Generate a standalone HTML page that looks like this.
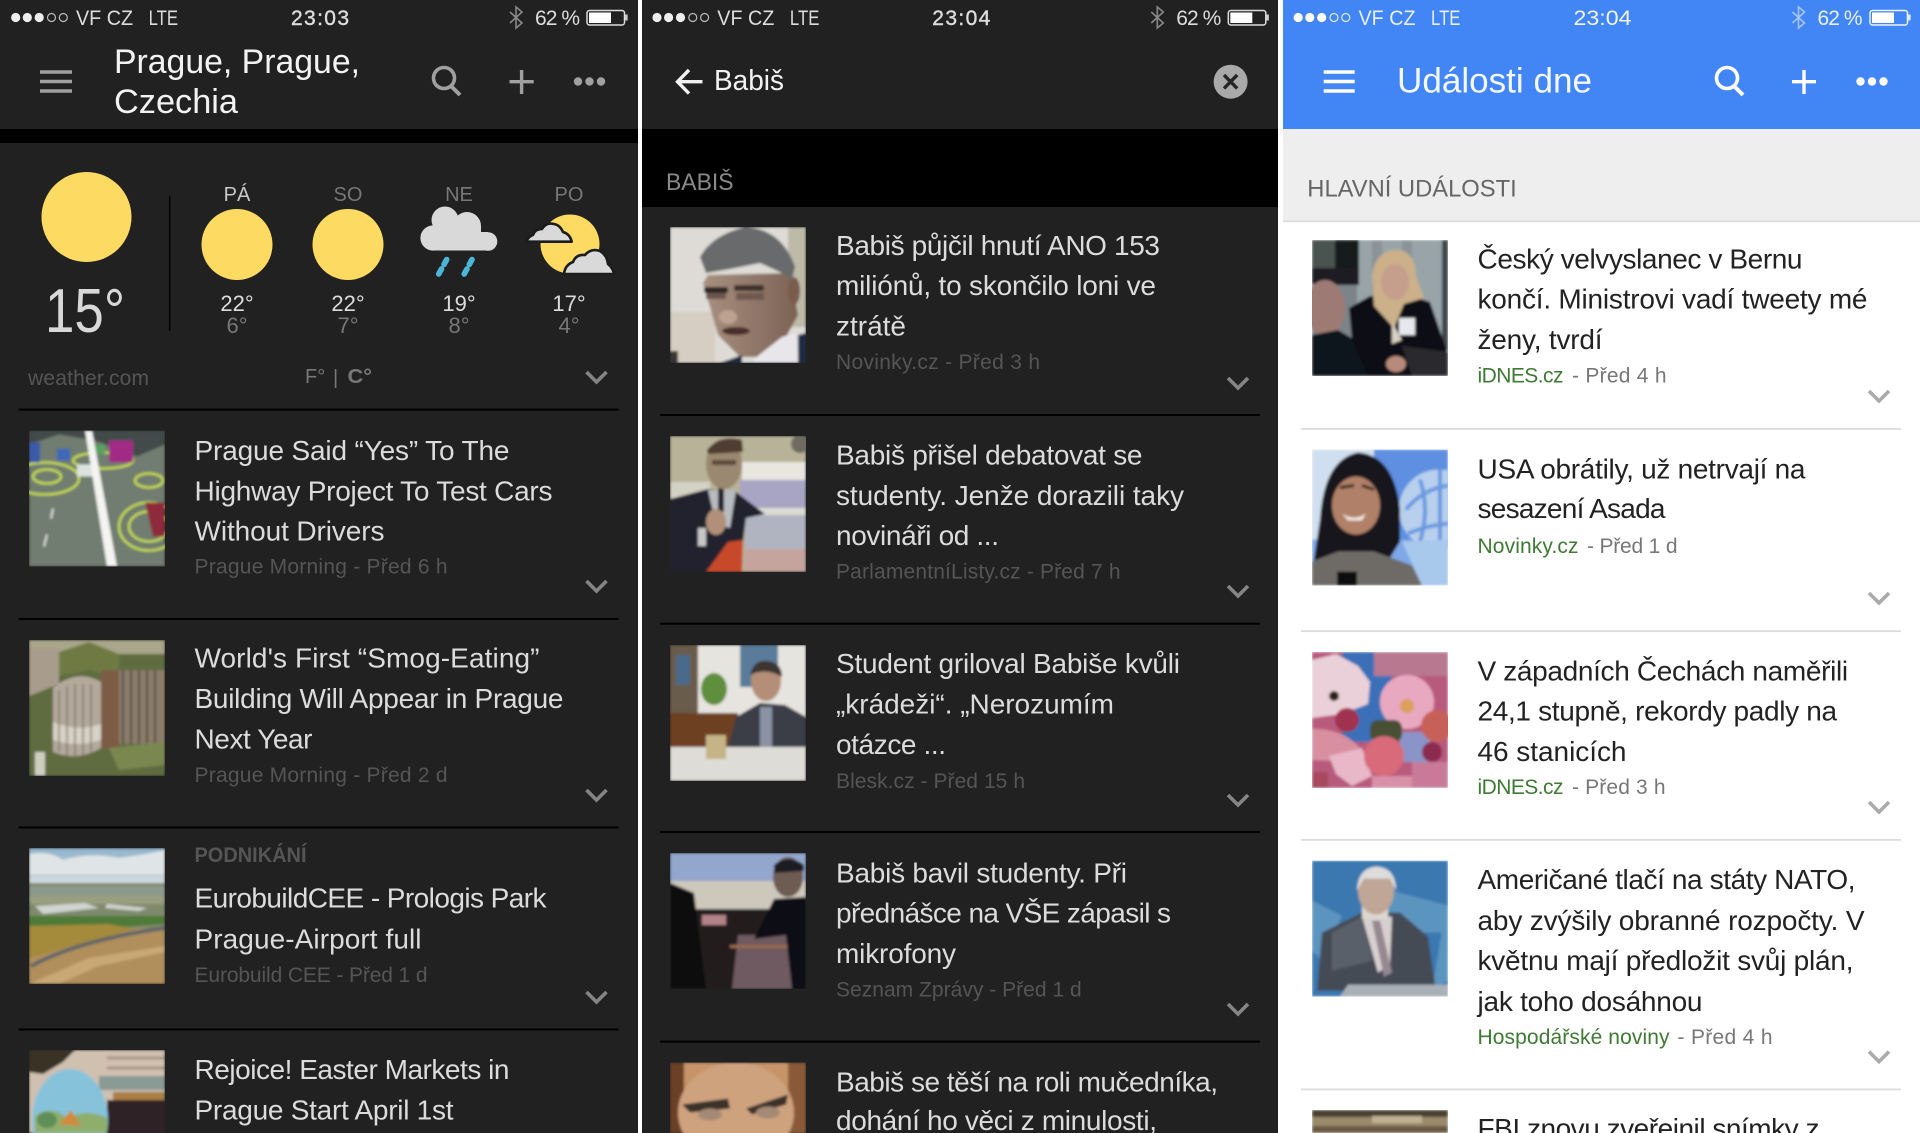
<!DOCTYPE html>
<html lang="cs"><head><meta charset="utf-8"><title>News</title>
<style>
html,body{margin:0;padding:0;background:#fff;width:1920px;height:1133px;overflow:hidden}
svg.root{display:block;position:absolute;left:0;top:0;filter:blur(.35px)}
text{font-family:"Liberation Sans",sans-serif;white-space:pre}
.s{font-size:21px;fill:#ddd}
.c{text-anchor:middle}
.ti{font-size:28px;fill:#dcdcdc}
.m{font-size:21px;fill:#555}
.h{font-size:34px;fill:#f2f2f2}
.d{font-size:20px;fill:#777}
.hi{font-size:22px;fill:#ddd}
.lo{font-size:22px;fill:#777}
.l .ti{fill:#222}
.l .m{fill:#777}
.l .g{fill:#3f7a35}
.ch{fill:none;stroke:#858585;stroke-width:3.6}
.l .ch{stroke:#aaa}
.dv{fill:#000}
.l .dv{fill:#dcdcdc}
</style></head><body>
<svg class="root" width="1920" height="1133" viewBox="0 0 1920 1133" xmlns="http://www.w3.org/2000/svg">
<defs>
<filter id="b" x="-10%" y="-10%" width="120%" height="120%"><feGaussianBlur stdDeviation="1.4"/></filter>
<linearGradient id="sky" x1="0" y1="0" x2="0" y2="1"><stop offset="0" stop-color="#8fb2cc"/><stop offset="1" stop-color="#d5dcdc"/></linearGradient>
<linearGradient id="face" x1="0" y1="0" x2="1" y2="0"><stop offset="0" stop-color="#a89080"/><stop offset="1" stop-color="#7c6254"/></linearGradient>
</defs>
<rect width="1920" height="1133" fill="#fff"/>

<!-- PANEL 1 -->
<rect x="0" y="0" width="638" height="1133" fill="#212121"/>
<rect x="0" y="129" width="638" height="14" fill="#000"/>
<g>
<circle cx="15.7" cy="17.5" r="4.6" fill="#eee"/><circle cx="27.3" cy="17.5" r="4.6" fill="#eee"/><circle cx="39.2" cy="17.5" r="4.6" fill="#eee"/><circle cx="51.5" cy="17.5" r="4" fill="none" stroke="#bbb" stroke-width="1.2"/><circle cx="63.3" cy="17.5" r="4" fill="none" stroke="#bbb" stroke-width="1.2"/>
<text class="s" x="76" y="25" textLength="57" lengthAdjust="spacingAndGlyphs">VF CZ</text><text class="s" x="148.6" y="25" textLength="29.5" lengthAdjust="spacingAndGlyphs">LTE</text>
<text class="s" x="291" y="25" textLength="58" stroke="#ddd" stroke-width=".4">23:03</text>
<path d="M510 12L522 23L516 28V7L522 12L510 23" fill="none" stroke="#888" stroke-width="1.6"/>
<text class="s" x="535" y="25" textLength="45">62 %</text>
<rect x="587" y="10.5" width="37.5" height="14.5" rx="2.5" fill="none" stroke="#ddd" stroke-width="1.5"/><rect x="589" y="12.5" width="22" height="10.5" fill="#fff"/><rect x="625" y="14.5" width="2.6" height="6" fill="#ccc"/>
</g>
<path d="M40 72H72M40 81.5H72M40 91H72" stroke="#a0a0a0" stroke-width="3.4"/>
<text class="h" x="114" y="73" textLength="246" lengthAdjust="spacingAndGlyphs">Prague, Prague,</text>
<text class="h" x="114" y="113" textLength="124" lengthAdjust="spacingAndGlyphs">Czechia</text>
<circle cx="444" cy="78" r="10.5" fill="none" stroke="#a0a0a0" stroke-width="3.6"/><path d="M451 86L460 95" stroke="#a0a0a0" stroke-width="4"/>
<path d="M521.6 70V94M509.5 81.7H533.7" stroke="#a0a0a0" stroke-width="3.4"/>
<circle cx="578" cy="81.5" r="4.2" fill="#a0a0a0"/><circle cx="589.5" cy="81.5" r="4.2" fill="#a0a0a0"/><circle cx="601" cy="81.5" r="4.2" fill="#a0a0a0"/>

<!-- weather -->
<circle cx="86.5" cy="217" r="45" fill="#fddb62"/>
<text x="45" y="332" font-size="62" fill="#d8d8d8" textLength="80" lengthAdjust="spacingAndGlyphs">15°</text>
<rect x="169" y="196" width="1.4" height="135" fill="#000"/>
<text class="d c" x="237" y="201" style="fill:#c8c8c8">PÁ</text><text class="d c" x="348" y="201">SO</text><text class="d c" x="459" y="201">NE</text><text class="d c" x="569" y="201">PO</text>
<circle cx="237" cy="244.5" r="35.5" fill="#fddb62"/><circle cx="348" cy="244.5" r="35.5" fill="#fddb62"/>
<g fill="#d9d9d9"><circle cx="445" cy="220" r="13.5"/><circle cx="467" cy="226" r="14"/><circle cx="433" cy="238" r="12.6"/><circle cx="488" cy="241.5" r="9.3"/><rect x="433" y="225" width="48" height="25.5"/><rect x="470" y="232" width="18" height="18.5"/></g>
<path d="M446.7 259.5L444 264.5M441.5 269L438.7 274M472 259.5L469.3 264.5M467 269L464.2 274" stroke="#4db6d8" stroke-width="5.6" stroke-linecap="round"/>
<circle cx="570" cy="244" r="29.5" fill="#fddb62"/>
<rect x="520" y="212" width="20" height="32" fill="#212121"/>
<path d="M526 241.7Q529 236 533 235Q535 229 542 229Q546 222 554 224Q560 225 563 232Q570 234 571.7 241.7Z" fill="#d9d9d9" stroke="#1c1c1c" stroke-width="2.6" stroke-linejoin="round"/>
<path d="M564 274Q565 265 573 262Q576 254 585 255Q591 248 600 251Q607 255 608 264Q613 268 614 274Z" fill="#d9d9d9" stroke="#1c1c1c" stroke-width="2.6" stroke-linejoin="round"/>
<rect x="558" y="275" width="60" height="8" fill="#212121"/>
<text class="hi c" x="237" y="311">22°</text><text class="hi c" x="348" y="311">22°</text><text class="hi c" x="459" y="311">19°</text><text class="hi c" x="569" y="311">17°</text>
<text class="lo c" x="237" y="333">6°</text><text class="lo c" x="348" y="333">7°</text><text class="lo c" x="459" y="333">8°</text><text class="lo c" x="569" y="333">4°</text>
<text class="m" x="28" y="385" textLength="121">weather.com</text>
<text x="305" y="383" font-size="20" fill="#777">F°</text><text x="333" y="384" font-size="20" fill="#777">|</text><text x="347.5" y="383" font-size="20" font-weight="700" fill="#777" textLength="24.5" lengthAdjust="spacingAndGlyphs">C°</text>
<path class="ch" d="M586.5 372L596.5 382L606.5 372"/>
<rect class="dv" x="18.5" y="408.6" width="600" height="2"/>

<!-- P1 articles -->
<svg x="29" y="430.5" width="136" height="136" viewBox="0 0 136 136"><g filter="url(#b)"><rect width="136" height="136" fill="#6f7d70"/><path d="M0 0H136V14L108 26L66 10L30 4L0 14Z" fill="#434c48"/><g fill="none" stroke="#c4d850" stroke-width="2.6"><ellipse cx="18" cy="46" rx="14" ry="7"/><ellipse cx="16" cy="48" rx="34" ry="16"/><ellipse cx="120" cy="50" rx="14" ry="7"/><ellipse cx="120" cy="96" rx="30" ry="24"/><ellipse cx="120" cy="96" rx="20" ry="15"/><ellipse cx="74" cy="30" rx="30" ry="8"/></g><rect x="0" y="12" width="11" height="20" fill="#3b5aa8"/><rect x="28" y="18" width="13" height="12" fill="#3f67b8"/><rect x="48" y="34" width="16" height="12" fill="#dce2de"/><rect x="66" y="14" width="10" height="10" fill="#58a060"/><rect x="80" y="10" width="24" height="22" fill="#a02a84"/><path d="M56 0L63 0L88 136L78 136Z" fill="#f4f4f2"/><path d="M116 72H136V106H124Z" fill="#8e2c3a"/><path d="M24 78L22 88M18 104L15 116" stroke="#ddd" stroke-width="2"/></g></svg>
<text class="ti" x="194.5" y="460" textLength="315">Prague Said “Yes” To The</text>
<text class="ti" x="194.5" y="500.5" textLength="358">Highway Project To Test Cars</text>
<text class="ti" x="194.5" y="540.5" textLength="190">Without Drivers</text>
<text class="m" x="194.5" y="573.6" textLength="253">Prague Morning - Před 6 h</text>
<path class="ch" d="M586.5 581L596.5 591L606.5 581"/>
<rect class="dv" x="18.5" y="618" width="600" height="2"/>

<svg x="29" y="640" width="136" height="136" viewBox="0 0 136 136"><g filter="url(#b)"><rect width="136" height="136" fill="#5f6c3f"/><rect width="136" height="14" fill="#a9a68a"/><path d="M0 8H30V44L0 56Z" fill="#a89c8c"/><path d="M30 12L60 2L90 14L90 40L62 30L30 36Z" fill="#6e7a42"/><path d="M24 48Q48 28 72 42V108Q48 122 24 112Z" fill="#b2a99b"/><path d="M24 82Q48 92 72 84V100Q48 108 24 100Z" fill="#d8d2c6"/><path d="M30 50V112M38 46V116M46 44V118M54 44V116M62 44V112" stroke="#7d7468" stroke-width="1.4"/><rect x="72" y="30" width="18" height="78" fill="#7d5c45"/><rect x="90" y="30" width="46" height="74" fill="#8a7d6b"/><path d="M94 30V104M102 30V104M110 30V104M118 30V104M126 30V104" stroke="#564c40" stroke-width="2"/><path d="M80 108L136 102V125L90 130Z" fill="#7a8850"/><rect x="6" y="112" width="10" height="24" fill="#cfcfc0"/></g></svg>
<text class="ti" x="194.5" y="667.7" textLength="345">World's First “Smog-Eating”</text>
<text class="ti" x="194.5" y="708" textLength="369">Building Will Appear in Prague</text>
<text class="ti" x="194.5" y="748.6" textLength="118">Next Year</text>
<text class="m" x="194.5" y="782" textLength="253">Prague Morning - Před 2 d</text>
<path class="ch" d="M586.5 790L596.5 800L606.5 790"/>
<rect class="dv" x="18.5" y="826.5" width="600" height="2"/>

<svg x="29" y="848" width="136" height="136" viewBox="0 0 136 136"><g filter="url(#b)"><rect width="136" height="36" fill="url(#sky)"/><path d="M0 6Q20 2 34 12Q60 4 90 10Q120 6 136 2V26H0Z" fill="#dfe5e6"/><rect y="35" width="136" height="101" fill="#7f8a6c"/><rect y="38" width="136" height="10" fill="#8c9a8c"/><rect y="48" width="136" height="8" fill="#9a9e80"/><path d="M6 58L56 55L70 60L14 66ZM78 56L118 60L110 63L76 60Z" fill="#cfd4d0"/><path d="M0 68H136V76L50 82L0 78Z" fill="#4f7a38"/><path d="M0 78L80 76L110 82L0 110Z" fill="#a48a3a"/><path d="M0 110L110 80L136 82V136H0Z" fill="#b08f5c"/><path d="M2 118Q50 92 136 80" fill="none" stroke="#626668" stroke-width="4"/><path d="M0 136L60 110L136 98V104L70 118L30 136Z" fill="#c8a875"/></g></svg>
<text x="194.5" y="862" font-size="21" font-weight="700" fill="#555" textLength="112" lengthAdjust="spacingAndGlyphs">PODNIKÁNÍ</text>
<text class="ti" x="194.5" y="907.5" textLength="352">EurobuildCEE - Prologis Park</text>
<text class="ti" x="194.5" y="948.5" textLength="227">Prague-Airport full</text>
<text class="m" x="194.5" y="982" textLength="233">Eurobuild CEE - Před 1 d</text>
<path class="ch" d="M586.5 992L596.5 1002L606.5 992"/>
<rect class="dv" x="18.5" y="1028.5" width="600" height="2"/>

<svg x="29" y="1050" width="136" height="83" viewBox="0 0 136 83"><g filter="url(#b)"><rect width="136" height="83" fill="#cfc0b0"/><path d="M0 0H46L34 12L14 24L0 22Z" fill="#3a3028"/><path d="M78 8H136M78 18H136" stroke="#a89484" stroke-width="3"/><rect x="70" y="26" width="66" height="14" fill="#8a9a94"/><rect x="84" y="42" width="52" height="10" fill="#a97f44"/><rect x="78" y="50" width="58" height="33" fill="#2f2325"/><ellipse cx="41" cy="70" rx="38" ry="51" fill="#86c3db"/><path d="M6 66Q22 54 38 68Q58 58 78 68V83H6Z" fill="#8fae6c"/><path d="M30 74L42 60L52 76Z" fill="#d08b3c"/><ellipse cx="18" cy="70" rx="10" ry="8" fill="#5f8e58"/></g></svg>
<text class="ti" x="194.5" y="1079" textLength="315">Rejoice! Easter Markets in</text>
<text class="ti" x="194.5" y="1119.5" textLength="259">Prague Start April 1st</text>

<!-- PANEL 2 -->
<rect x="642" y="0" width="636" height="1133" fill="#212121"/>
<rect x="642" y="129" width="636" height="78" fill="#000"/>
<g>
<circle cx="657" cy="17.5" r="4.6" fill="#eee"/><circle cx="668.6" cy="17.5" r="4.6" fill="#eee"/><circle cx="680.5" cy="17.5" r="4.6" fill="#eee"/><circle cx="692.8" cy="17.5" r="4" fill="none" stroke="#bbb" stroke-width="1.2"/><circle cx="704.6" cy="17.5" r="4" fill="none" stroke="#bbb" stroke-width="1.2"/>
<text class="s" x="717.3" y="25" textLength="57" lengthAdjust="spacingAndGlyphs">VF CZ</text><text class="s" x="789.9" y="25" textLength="29.5" lengthAdjust="spacingAndGlyphs">LTE</text>
<text class="s" x="932.3" y="25" textLength="58" stroke="#ddd" stroke-width=".4">23:04</text>
<path d="M1151.3 12L1163.3 23L1157.3 28V7L1163.3 12L1151.3 23" fill="none" stroke="#888" stroke-width="1.6"/>
<text class="s" x="1176.3" y="25" textLength="45">62 %</text>
<rect x="1228.3" y="10.5" width="37.5" height="14.5" rx="2.5" fill="none" stroke="#ddd" stroke-width="1.5"/><rect x="1230.3" y="12.5" width="22" height="10.5" fill="#fff"/><rect x="1266.3" y="14.5" width="2.6" height="6" fill="#ccc"/>
</g>
<path d="M702.5 81.7H678M689 70L677.5 81.7L689 93.5" fill="none" stroke="#f2f2f2" stroke-width="3.4"/>
<text x="714" y="90" font-size="29" fill="#f2f2f2" textLength="70" lengthAdjust="spacingAndGlyphs">Babiš</text>
<circle cx="1230.6" cy="81.7" r="17" fill="#a9a9a9"/><path d="M1224 75L1237.2 88.4M1237.2 75L1224 88.4" stroke="#262626" stroke-width="3.4"/>
<text x="666" y="190" font-size="24" fill="#8a8a8a" textLength="67.5" lengthAdjust="spacingAndGlyphs">BABIŠ</text>

<svg x="670" y="227" width="136" height="136" viewBox="0 0 136 136"><g filter="url(#b)"><rect width="136" height="136" fill="#dedbd6"/><rect y="85" width="45" height="51" fill="#d6cec2"/><rect x="118" width="18" height="100" fill="#bdbaa8"/><path d="M33 56L38 48L120 46L128 88L116 110L92 130H70L48 108Z" fill="url(#face)"/><path d="M30 30Q42 8 75 0Q112 2 125 40L122 52L112 46L90 36L60 42L36 46Z" fill="#686a6c"/><ellipse cx="124" cy="64" rx="6" ry="14" fill="#7a5c50"/><rect x="34" y="60" width="24" height="6" rx="2" fill="#2e2624"/><rect x="64" y="58" width="30" height="6" rx="2" fill="#3e302c"/><rect x="36" y="66" width="20" height="6" fill="#6a5650"/><rect x="66" y="66" width="28" height="7" fill="#6e5850"/><ellipse cx="58" cy="90" rx="9" ry="7" fill="#bda292"/><ellipse cx="66" cy="104" rx="14" ry="4" fill="#4a2e2a"/><path d="M84 132L112 110L126 106L128 136H84Z" fill="#e8e6ea"/><path d="M50 136L72 128V136ZM128 108L136 106V136H128Z" fill="#1f2a44"/><rect x="0" y="124" width="8" height="12" fill="#3a3630"/></g></svg>
<text class="ti" x="836" y="255" textLength="324">Babiš půjčil hnutí ANO 153</text>
<text class="ti" x="836" y="295" textLength="320">miliónů, to skončilo loni ve</text>
<text class="ti" x="836" y="335.7" textLength="70">ztrátě</text>
<text class="m" x="836" y="369" textLength="204">Novinky.cz - Před 3 h</text>
<path class="ch" d="M1228 378L1238 388L1248 378"/>
<rect class="dv" x="660" y="414" width="600" height="2"/>

<svg x="670" y="436" width="136" height="136" viewBox="0 0 136 136"><g filter="url(#b)"><rect width="136" height="136" fill="#b8b298"/><rect y="46" width="40" height="16" fill="#d4d2c4"/><rect x="72" y="26" width="64" height="18" fill="#e8e6de"/><rect x="70" y="44" width="66" height="28" fill="#a8a4c4"/><rect x="80" y="72" width="56" height="7" fill="#dcdcd4"/><circle cx="130" cy="8" r="9" fill="#6e6c60"/><rect x="75" y="79" width="61" height="34" fill="#b0b4c0"/><rect x="75" y="113" width="61" height="23" fill="#c4a49c"/><path d="M0 63L38 53L66 56L95 78L76 82L73 106L50 136H0Z" fill="#20222e"/><path d="M38 54L66 54L60 92L46 88Z" fill="#b8bcc0"/><rect x="48" y="46" width="6" height="30" fill="#232328"/><ellipse cx="54" cy="28" rx="18" ry="25" fill="#9a8870"/><path d="M37 14Q50 -2 72 4L73 16L38 18Z" fill="#4f3e30"/><rect x="42" y="24" width="24" height="5" fill="#5c4a3c"/><ellipse cx="46" cy="86" rx="10" ry="13" fill="#b09078"/><path d="M36 136L58 106L73 104L72 136Z" fill="#c84a2a"/><rect x="28" y="92" width="8" height="18" fill="#c8c8c8"/></g></svg>
<text class="ti" x="836" y="464.5" textLength="306.5">Babiš přišel debatovat se</text>
<text class="ti" x="836" y="505" textLength="348">studenty. Jenže dorazili taky</text>
<text class="ti" x="836" y="545" textLength="163">novináři od ...</text>
<text class="m" x="836" y="578.6" textLength="284.5">ParlamentníListy.cz - Před 7 h</text>
<path class="ch" d="M1228 586L1238 596L1248 586"/>
<rect class="dv" x="660" y="622.7" width="600" height="2"/>

<svg x="670" y="645" width="136" height="136" viewBox="0 0 136 136"><g filter="url(#b)"><rect width="136" height="136" fill="#e6e4de"/><rect width="28" height="68" fill="#6b5b4c"/><rect x="6" y="10" width="14" height="30" fill="#4a6a8a"/><rect x="70" width="38" height="42" fill="#5a7c9a"/><ellipse cx="44" cy="44" rx="13" ry="16" fill="#5e8e3e"/><rect x="0" y="68" width="68" height="34" fill="#6e3f22"/><path d="M58 104L66 72L90 58L115 60L136 72V112H58Z" fill="#3a3c46"/><rect x="90" y="62" width="12" height="46" fill="#8b93a4"/><ellipse cx="96" cy="36" rx="15" ry="20" fill="#b48e76"/><path d="M80 30Q84 14 98 16Q112 18 112 32Q96 22 80 30Z" fill="#3c3632"/><rect x="0" y="102" width="136" height="34" fill="#dedcd6"/><rect x="36" y="90" width="20" height="24" fill="#c4b486"/></g></svg>
<text class="ti" x="836" y="673" textLength="344">Student griloval Babiše kvůli</text>
<text class="ti" x="836" y="713.7" textLength="278">„krádeži“. „Nerozumím</text>
<text class="ti" x="836" y="754" textLength="110">otázce ...</text>
<text class="m" x="836" y="788" textLength="189">Blesk.cz - Před 15 h</text>
<path class="ch" d="M1228 795L1238 805L1248 795"/>
<rect class="dv" x="660" y="831" width="600" height="2"/>

<svg x="670" y="853" width="136" height="136" viewBox="0 0 136 136"><g filter="url(#b)"><rect width="136" height="30" fill="#93a6cc"/><rect y="28" width="136" height="30" fill="#cdc8bc"/><rect y="56" width="136" height="80" fill="#231b1c"/><path d="M0 30L24 40L36 136H0Z" fill="#0e0e10"/><rect x="32" y="62" width="24" height="10" fill="#b3838a"/><path d="M62 136L68 82H116L122 136Z" fill="#6e5a60"/><rect x="60" y="92" width="68" height="3" fill="#9c6a50"/><path d="M84 86L104 46L136 44V136H122L116 82Z" fill="#0f0f12"/><ellipse cx="118" cy="24" rx="15" ry="20" fill="#6e5c52"/><path d="M104 12Q118 0 134 12L134 18L104 20Z" fill="#1d1d20"/></g></svg>
<text class="ti" x="836" y="882.5" textLength="291">Babiš bavil studenty. Při</text>
<text class="ti" x="836" y="922.5" textLength="335">přednášce na VŠE zápasil s</text>
<text class="ti" x="836" y="963" textLength="120">mikrofony</text>
<text class="m" x="836" y="996.6" textLength="245.7">Seznam Zprávy - Před 1 d</text>
<path class="ch" d="M1228 1004L1238 1014L1248 1004"/>
<rect class="dv" x="660" y="1040.6" width="600" height="2"/>

<svg x="670" y="1062.5" width="136" height="71" viewBox="0 0 136 71"><g filter="url(#b)"><rect width="136" height="71" fill="#c69468"/><rect width="14" height="71" fill="#6a3f28"/><rect x="118" width="18" height="71" fill="#8a5a38"/><ellipse cx="66" cy="50" rx="58" ry="50" fill="#cfa27e"/><path d="M12 42L58 36L60 46L20 50ZM76 46L118 32L116 42L82 52Z" fill="#3a322c"/><ellipse cx="40" cy="52" rx="12" ry="6" fill="#a48a76"/><ellipse cx="98" cy="50" rx="12" ry="6" fill="#a48a76"/></g></svg>
<text class="ti" x="836" y="1091.6" textLength="382">Babiš se těší na roli mučedníka,</text>
<text class="ti" x="836" y="1130" textLength="321">dohání ho věci z minulosti,</text>

<!-- PANEL 3 -->
<g class="l">
<rect x="1283" y="0" width="637" height="129" fill="#4285f4"/>
<rect x="1283" y="129" width="637" height="92" fill="#eeeeee"/>
<rect x="1283" y="220.5" width="637" height="1.6" fill="#d8d8d8"/>
<g>
<circle cx="1298.2" cy="17.5" r="4.6" fill="#fff"/><circle cx="1309.8" cy="17.5" r="4.6" fill="#fff"/><circle cx="1321.7" cy="17.5" r="4.6" fill="#fff"/><circle cx="1334" cy="17.5" r="4" fill="none" stroke="#dfe9fb" stroke-width="1.2"/><circle cx="1345.8" cy="17.5" r="4" fill="none" stroke="#dfe9fb" stroke-width="1.2"/>
<text class="s" x="1358.5" y="25" textLength="57" lengthAdjust="spacingAndGlyphs" style="fill:#e8f0fd">VF CZ</text><text class="s" x="1431" y="25" textLength="29.5" lengthAdjust="spacingAndGlyphs" style="fill:#e8f0fd">LTE</text>
<text class="s" x="1573.5" y="25" textLength="58" lengthAdjust="spacingAndGlyphs" style="fill:#f0f5fe">23:04</text>
<path d="M1792.5 12L1804.5 23L1798.5 28V7L1804.5 12L1792.5 23" fill="none" stroke="#a7c5f9" stroke-width="1.6"/>
<text class="s" x="1817.5" y="25" textLength="45" style="fill:#e8f0fd">62 %</text>
<rect x="1870" y="10.5" width="37.5" height="14.5" rx="2.5" fill="none" stroke="#eef4fe" stroke-width="1.5"/><rect x="1872" y="12.5" width="22" height="10.5" fill="#fff"/><rect x="1908" y="14.5" width="2.6" height="6" fill="#e0eafd"/>
</g>
<path d="M1323.7 72H1354.7M1323.7 81.5H1354.7M1323.7 91H1354.7" stroke="#fff" stroke-width="3.4"/>
<text x="1397" y="92.7" font-size="35" fill="#f4f8ff" textLength="195" lengthAdjust="spacingAndGlyphs">Události dne</text>
<circle cx="1727" cy="78" r="10.5" fill="none" stroke="#fff" stroke-width="3.6"/><path d="M1734 86L1743 95" stroke="#fff" stroke-width="4"/>
<path d="M1804 70V94M1792 81.7H1816" stroke="#fff" stroke-width="3.4"/>
<circle cx="1860.5" cy="81.5" r="4.2" fill="#fff"/><circle cx="1872" cy="81.5" r="4.2" fill="#fff"/><circle cx="1883.5" cy="81.5" r="4.2" fill="#fff"/>
<text x="1307.3" y="196.7" font-size="24" fill="#666" textLength="209.4" lengthAdjust="spacingAndGlyphs">HLAVNÍ UDÁLOSTI</text>

<svg x="1312" y="240" width="136" height="136" viewBox="0 0 136 136"><g filter="url(#b)"><rect width="136" height="136" fill="#7c8488"/><rect x="45" width="85" height="110" fill="#98a4a8"/><path d="M60 0H70V60H60ZM90 0H100V30H90Z" fill="#8a9498"/><rect x="130" width="6" height="110" fill="#3c4448"/><rect width="45" height="36" fill="#4a5250"/><rect x="23" width="24" height="45" fill="#181c1c"/><rect x="0" y="28" width="44" height="16" fill="#1c1e20"/><ellipse cx="13" cy="68" rx="20" ry="28" fill="#9e7a74"/><path d="M0 95L26 90L60 110L70 136H0Z" fill="#10141e"/><path d="M37 68L58 56L100 56L118 62L134 108L136 136H56L40 100Z" fill="#0e0f14"/><path d="M60 36Q64 8 88 10Q104 14 104 36L112 58L92 64L82 88L62 66Z" fill="#cbb089"/><ellipse cx="83" cy="42" rx="14" ry="18" fill="#c69e8c"/><path d="M80 82L90 100L80 104Z" fill="#d8cfc0"/><rect x="87" y="78" width="16" height="17" fill="#e6e8ee"/><path d="M90 106L136 112V136H100Z" fill="#2a2a2e"/><ellipse cx="84" cy="124" rx="10" ry="8" fill="#b88a7c"/></g></svg>
<text class="ti" x="1477.5" y="268.7" textLength="325">Český velvyslanec v Bernu</text>
<text class="ti" x="1477.5" y="308.7" textLength="390">končí. Ministrovi vadí tweety mé</text>
<text class="ti" x="1477.5" y="349" textLength="125">ženy, tvrdí</text>
<text class="m g" x="1477.5" y="382.7" textLength="86">iDNES.cz</text><text class="m" x="1572" y="382.7" textLength="94.5">- Před 4 h</text>
<path class="ch" d="M1869 391L1879 401L1889 391"/>
<rect class="dv" x="1301" y="428" width="600" height="1.8"/>

<svg x="1312" y="449.5" width="136" height="136" viewBox="0 0 136 136"><g filter="url(#b)"><rect width="136" height="136" fill="#7fa8e8"/><rect x="60" width="76" height="90" fill="#5f8fe0"/><rect width="62" height="90" fill="#d0dff0"/><circle cx="127" cy="60" r="40" fill="#b8d0ee"/><path d="M94 60Q110 40 136 36M96 84Q115 76 136 74M128 20V100M108 30Q118 60 108 92" stroke="#6a9ae0" stroke-width="4" fill="none"/><path d="M90 92L136 90V136H110Z" fill="#a8c8ec"/><path d="M2 110L8 70Q12 10 46 3Q82 6 88 60L88 92L72 118H10Z" fill="#15161a"/><ellipse cx="44" cy="56" rx="24" ry="29" fill="#b08068"/><path d="M30 64Q42 72 54 64L50 71H36Z" fill="#efe4dc"/><path d="M28 38L42 36M50 36L62 40" stroke="#3a2620" stroke-width="3"/><path d="M0 112L26 102L62 102L100 116L110 136H0Z" fill="#6e6a66"/><rect x="25" y="122" width="20" height="14" fill="#0c0c10"/></g></svg>
<text class="ti" x="1477.5" y="478.7" textLength="328">USA obrátily, už netrvají na</text>
<text class="ti" x="1477.5" y="518" textLength="188">sesazení Asada</text>
<text class="m g" x="1477.5" y="552.8" textLength="101">Novinky.cz</text><text class="m" x="1587" y="552.8" textLength="90.5">- Před 1 d</text>
<path class="ch" d="M1869 593L1879 603L1889 593"/>
<rect class="dv" x="1301" y="630.3" width="600" height="1.8"/>

<svg x="1312" y="652" width="136" height="136" viewBox="0 0 136 136"><g filter="url(#b)"><rect width="136" height="136" fill="#b85a7c"/><rect x="30" width="50" height="90" fill="#3a70b8"/><rect x="62" width="74" height="24" fill="#b87890"/><rect x="88" y="80" width="30" height="30" fill="#8a94c8"/><path d="M0 8L24 2L46 14L58 30L56 52L30 62L0 66Z" fill="#ead0d8"/><circle cx="22" cy="44" r="5" fill="#2a2410"/><circle cx="95" cy="50" r="27" fill="#e8a8c0"/><circle cx="95" cy="54" r="7" fill="#dca05a"/><circle cx="35" cy="68" r="12" fill="#a03050"/><rect x="58" y="68" width="32" height="22" rx="8" fill="#4a5030"/><path d="M0 77Q30 76 48 96L40 110L0 108Z" fill="#d890a0"/><path d="M17 104L50 96L60 124L40 134L24 122Z" fill="#e8b8c8"/><circle cx="72" cy="104" r="20" fill="#d86a7a"/><circle cx="125" cy="74" r="16" fill="#c8605a"/><circle cx="120" cy="100" r="10" fill="#8c2a50"/><rect x="100" y="110" width="36" height="26" fill="#c87a98"/><rect x="60" y="124" width="40" height="12" fill="#d890a8"/><rect y="120" width="16" height="16" fill="#a84860"/></g></svg>
<text class="ti" x="1477.5" y="680.5" textLength="370.6">V západních Čechách naměřili</text>
<text class="ti" x="1477.5" y="720.6" textLength="359.6">24,1 stupně, rekordy padly na</text>
<text class="ti" x="1477.5" y="761" textLength="149">46 stanicích</text>
<text class="m g" x="1477.5" y="794" textLength="86">iDNES.cz</text><text class="m" x="1572" y="794" textLength="93.5">- Před 3 h</text>
<path class="ch" d="M1869 802L1879 812L1889 802"/>
<rect class="dv" x="1301" y="839" width="600" height="1.8"/>

<svg x="1312" y="860.6" width="136" height="136" viewBox="0 0 136 136"><g filter="url(#b)"><rect width="136" height="136" fill="#3a78b0"/><path d="M80 30L136 45V72H60ZM0 40L30 55L10 100L0 90Z" fill="#5c94c0"/><path d="M130 70H136V120L120 130Z" fill="#5c94c0"/><path d="M5 130L10 72L50 52L88 52L116 76L124 130Z" fill="#454b54"/><path d="M20 72L50 56L60 100L20 110Z" fill="#5a606a"/><path d="M50 56L80 56L78 104L66 112Z" fill="#d8d0d0"/><path d="M60 60L68 60L80 112L72 116Z" fill="#968890"/><rect x="50" y="44" width="26" height="14" fill="#dcd8d0"/><ellipse cx="64" cy="30" rx="18" ry="24" fill="#bfa696"/><path d="M45 30Q46 6 66 6Q84 8 84 30L78 18L52 18Z" fill="#dcdcdc"/><path d="M28 136L36 124H136V136Z" fill="#a8b0b8"/></g></svg>
<text class="ti" x="1477.5" y="889" textLength="378">Američané tlačí na státy NATO,</text>
<text class="ti" x="1477.5" y="930" textLength="387">aby zvýšily obranné rozpočty. V</text>
<text class="ti" x="1477.5" y="970" textLength="376">květnu mají předložit svůj plán,</text>
<text class="ti" x="1477.5" y="1011" textLength="225">jak toho dosáhnou</text>
<text class="m g" x="1477.5" y="1044" textLength="192">Hospodářské noviny</text><text class="m" x="1677.5" y="1044" textLength="95">- Před 4 h</text>
<path class="ch" d="M1869 1051.6L1879 1061.6L1889 1051.6"/>
<rect class="dv" x="1301" y="1088.5" width="600" height="1.8"/>

<svg x="1312" y="1110" width="136" height="23" viewBox="0 0 136 23"><g filter="url(#b)"><rect width="136" height="23" fill="#9a8a6c"/><rect width="136" height="7" fill="#4a4032"/><rect x="60" y="6" width="50" height="7" fill="#c0b094"/><rect y="16" width="136" height="7" fill="#6a5a44"/></g></svg>
<text class="ti" x="1477.5" y="1138" textLength="342">FBI znovu zveřejnil snímky z</text>
</g>
</svg>
</body></html>
